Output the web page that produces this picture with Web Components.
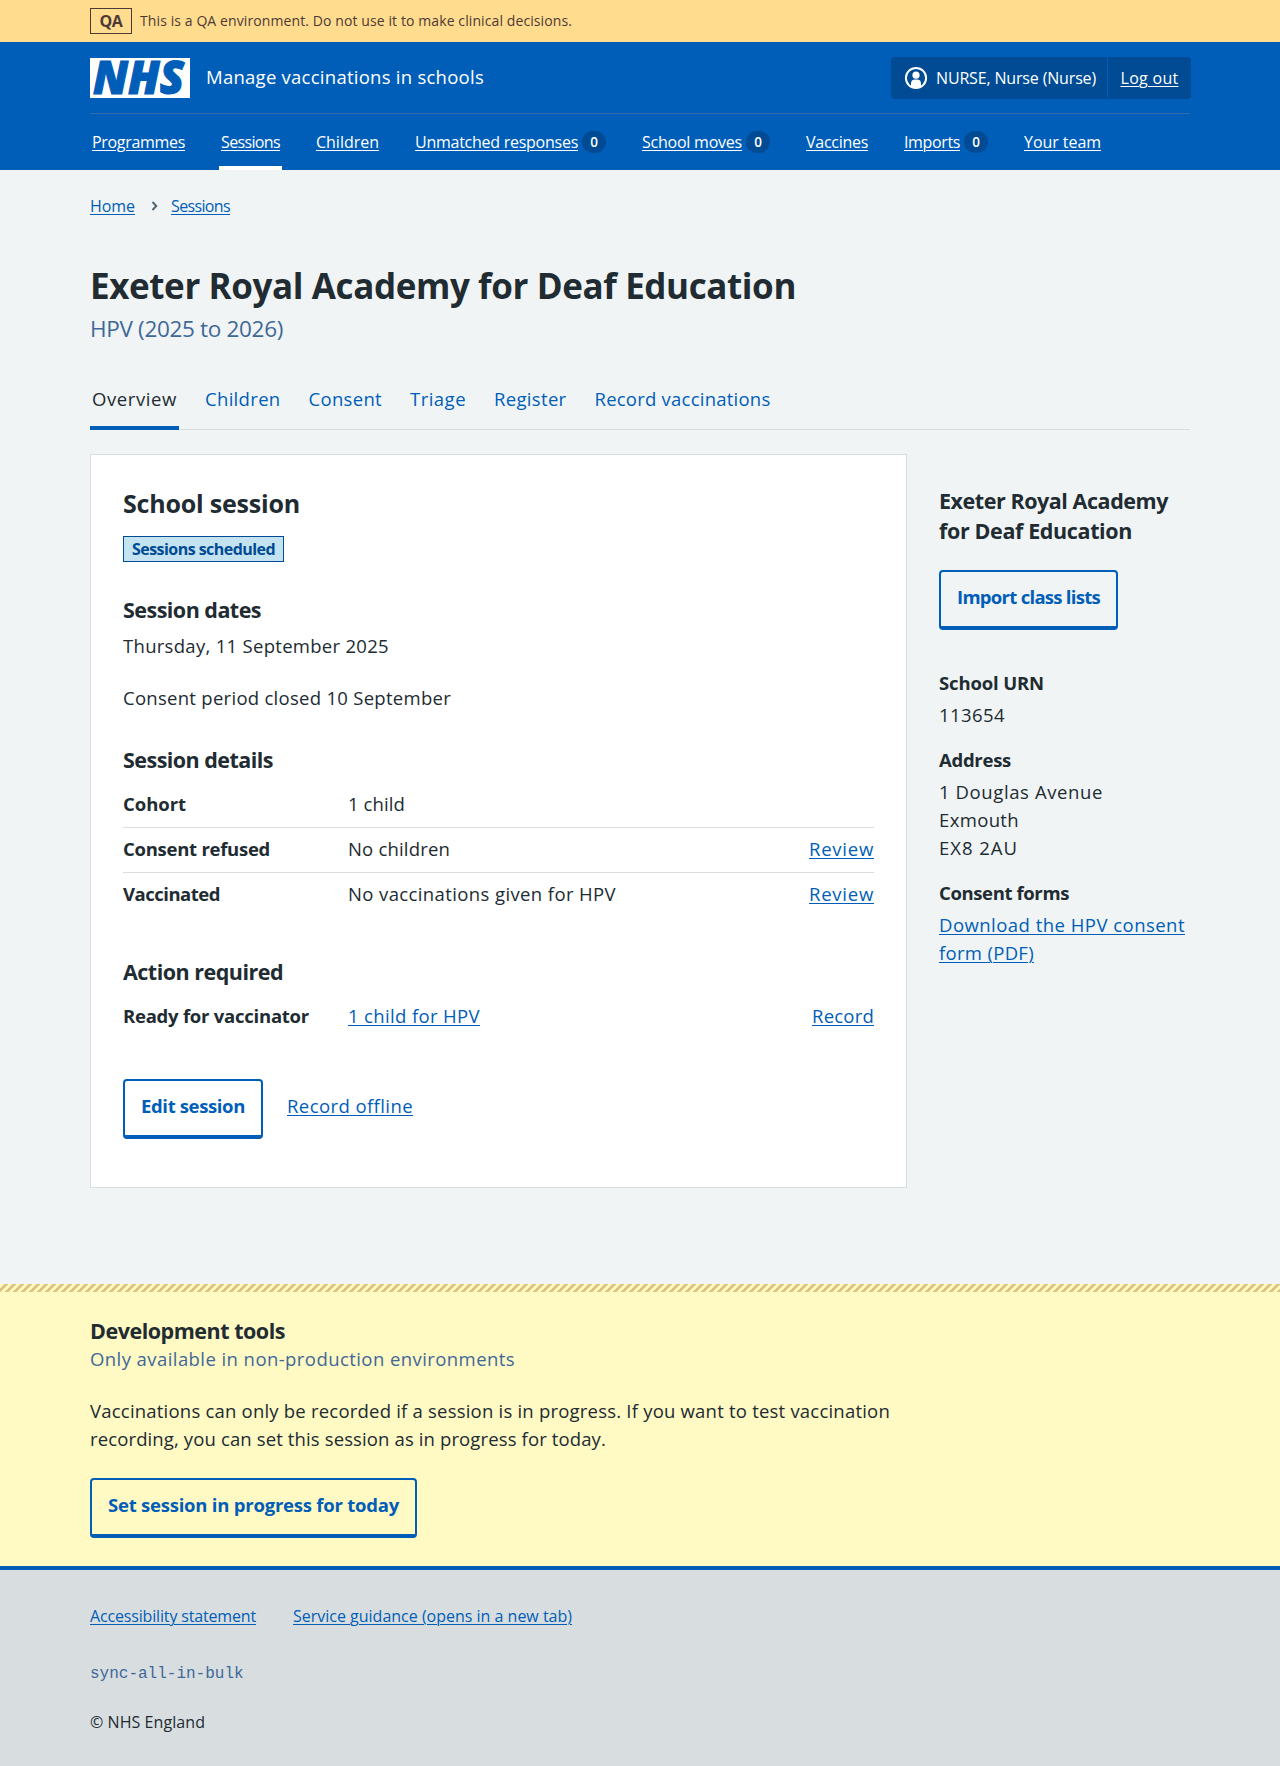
<!DOCTYPE html>
<html lang="en">
<head>
<meta charset="utf-8">
<title>Exeter Royal Academy for Deaf Education – Manage vaccinations in schools</title>
<style>
html{background:#d8dde0}
body{margin:0;background:#f0f4f5;color:#212b32;font-family:"Open Sans","Noto Sans",sans-serif;font-size:18.5px;line-height:28px}
</style>
</head>
<body>
<env-banner name="QA"><t-x w="432" s="14" l="22">This is a QA environment. Do not use it to make clinical decisions.</t-x></env-banner>
<site-header>
  <t-x slot="service" w="278" s="18.5">Manage vaccinations in schools</t-x>
  <t-x slot="user" w="160" s="16">NURSE, Nurse (Nurse)</t-x>
  <t-x slot="logout" link w="58" s="16">Log out</t-x>
  <nav-item><t-x link w="93" s="16">Programmes</t-x></nav-item>
  <nav-item current><t-x link w="59" s="16">Sessions</t-x></nav-item>
  <nav-item><t-x link w="63" s="16">Children</t-x></nav-item>
  <nav-item count="0"><t-x link w="163" s="16">Unmatched responses</t-x></nav-item>
  <nav-item count="0"><t-x link w="100" s="16">School moves</t-x></nav-item>
  <nav-item><t-x link w="62" s="16">Vaccines</t-x></nav-item>
  <nav-item count="0"><t-x link w="56" s="16">Imports</t-x></nav-item>
  <nav-item><t-x link w="77" s="16">Your team</t-x></nav-item>
</site-header>
<page-main>
  <bread-crumbs slot="top">
    <t-x slot="home" link w="45" s="16" l="24">Home</t-x>
    <t-x slot="here" link w="59" s="16" l="24">Sessions</t-x>
  </bread-crumbs>
  <page-title slot="top">
    <t-x b w="706" s="35" l="46">Exeter Royal Academy for Deaf Education</t-x>
    <t-x slot="caption" w="193" s="22.5" l="32">HPV (2025 to 2026)</t-x>
  </page-title>
  <tab-bar slot="top">
    <tab-item current><t-x w="85">Overview</t-x></tab-item>
    <tab-item><t-x w="75.5">Children</t-x></tab-item>
    <tab-item><t-x w="73.5">Consent</t-x></tab-item>
    <tab-item><t-x w="56">Triage</t-x></tab-item>
    <tab-item><t-x w="72.5">Register</t-x></tab-item>
    <tab-item><t-x w="176">Record vaccinations</t-x></tab-item>
  </tab-bar>
  <session-card>
    <t-x slot="title" b w="177" s="25" l="34">School session</t-x>
    <t-x slot="tag" b w="143" s="16" l="24">Sessions scheduled</t-x>
    <card-section space="32" gap="7">
      <t-x slot="title" b w="138" s="21.5" l="30">Session dates</t-x>
      <text-stack gap="24">
        <t-x w="266">Thursday, 11 September 2025</t-x>
        <t-x w="328">Consent period closed 10 September</t-x>
      </text-stack>
    </card-section>
    <card-section space="33" gap="8">
      <t-x slot="title" b w="150" s="21.5" l="30">Session details</t-x>
      <summary-row><t-x b w="63">Cohort</t-x><t-x slot="value" w="57">1 child</t-x></summary-row>
      <summary-row><t-x b w="147">Consent refused</t-x><t-x slot="value" w="102">No children</t-x><t-x slot="action" link w="65">Review</t-x></summary-row>
      <summary-row last><t-x b w="97">Vaccinated</t-x><t-x slot="value" w="268">No vaccinations given for HPV</t-x><t-x slot="action" link w="65">Review</t-x></summary-row>
    </card-section>
    <card-section space="39" gap="8">
      <t-x slot="title" b w="160" s="21.5" l="30">Action required</t-x>
      <summary-row last><t-x b w="186">Ready for vaccinator</t-x><t-x slot="value" link w="132">1 child for HPV</t-x><t-x slot="action" link w="62">Record</t-x></summary-row>
    </card-section>
    <app-button slot="actions" fill><t-x b w="104">Edit session</t-x></app-button>
    <t-x slot="actions" link w="126">Record offline</t-x>
  </session-card>
  <school-aside slot="aside">
    <t-x slot="title" b w="229" s="21.5" l="30">Exeter Royal Academy</t-x>
    <t-x slot="title" b w="193" s="21.5" l="30">for Deaf Education</t-x>
    <app-button slot="action"><t-x b w="143">Import class lists</t-x></app-button>
    <side-item><t-x slot="term" b w="105">School URN</t-x><t-x w="66">113654</t-x></side-item>
    <side-item><t-x slot="term" b w="72">Address</t-x><t-x w="164">1 Douglas Avenue</t-x><t-x w="80">Exmouth</t-x><t-x w="79">EX8 2AU</t-x></side-item>
    <side-item><t-x slot="term" b w="130">Consent forms</t-x><t-x link w="246">Download the HPV consent</t-x><t-x link w="95">form (PDF)</t-x></side-item>
  </school-aside>
</page-main>
<dev-tools>
  <t-x slot="title" b w="195" s="21.5">Development tools</t-x>
  <t-x slot="caption" w="425">Only available in non-production environments</t-x>
  <t-x w="800">Vaccinations can only be recorded if a session is in progress. If you want to test vaccination</t-x>
  <t-x w="516">recording, you can set this session as in progress for today.</t-x>
  <app-button slot="action"><t-x b w="291">Set session in progress for today</t-x></app-button>
</dev-tools>
<site-footer>
  <t-x slot="links" link w="166" s="16" l="24">Accessibility statement</t-x>
  <t-x slot="links" link w="279" s="16" l="24">Service guidance (opens in a new tab)</t-x>
  <span slot="build">sync-all-in-bulk</span>
  <t-x w="115" s="16" l="24">© NHS England</t-x>
</site-footer>
<script>
const define = (name, html, setup) => customElements.define(name, class extends HTMLElement {
  constructor(){
    super();
    const root = this.attachShadow({mode:'open'});
    const t = document.createElement('template');
    t.innerHTML = html;
    root.append(t.content.cloneNode(true));
  }
  connectedCallback(){ if(setup) setup(this, this.shadowRoot); }
});

define('env-banner', `<style>
:host{display:block;background:#ffdc8e;color:#4d3a36}
.in{width:1100px;height:42px;margin:auto;display:flex;align-items:center;gap:8px}
b{box-sizing:border-box;width:42px;height:26px;border:1px solid;font-size:16px;line-height:24px;font-weight:700;letter-spacing:-.5px;text-align:center}
</style><div class="in"><b></b><slot></slot></div>`, (h,r)=>r.querySelector('b').textContent=h.getAttribute('name'));

define('nhs-logo', `<style>:host{display:block;width:100px;height:40px}svg{display:block;overflow:visible}</style>
<svg width="100" height="40" viewBox="0 0 100 40"><rect width="100" height="40" fill="#fff"/>
<text x="3" y="36" textLength="91" lengthAdjust="spacingAndGlyphs" font-family="Open Sans" font-weight="800" font-style="italic" font-size="46" fill="#005eb8" stroke="#005eb8" stroke-width="1.2">NHS</text></svg>`);

define('user-icon', `<style>:host{display:block}svg{display:block}</style>
<svg width="24" height="24" viewBox="0 0 24 24"><circle cx="12" cy="12" r="10.1" fill="none" stroke="#fff" stroke-width="2"/>
<circle cx="12" cy="9.2" r="3.6" fill="#fff"/><path d="M7 20.6V17.5a4 4 0 0 1 4-4h2a4 4 0 0 1 4 4v3.1A10 10 0 0 1 7 20.6Z" fill="#fff"/></svg>`);

define('site-header', `<style>
:host{display:block;background:#005eb8;color:#fff}
.in{width:1100px;margin:auto}
.top{height:72px;display:flex;align-items:center;gap:16px;box-shadow:inset 0 -1px #336bad}
::slotted(t-x[slot=service]){padding-bottom:2px}
.account{margin-left:auto;margin-right:-1px;display:flex;height:42px;width:300px;background:#004b93;border-radius:4px}
.account>div{display:flex;align-items:center}
.user{width:216px;box-sizing:border-box;padding-left:13px;gap:8px}
.out{flex:1;justify-content:center;border-left:1px solid #005eb8;margin:1px 0}
nav{display:flex;gap:32px;height:56px}
</style><div class="in"><div class="top"><nhs-logo></nhs-logo><slot name="service"></slot>
<div class="account"><div class="user"><user-icon></user-icon><slot name="user"></slot></div><div class="out"><slot name="logout"></slot></div></div></div>
<nav><slot></slot></nav></div>`);

define('nav-item', `<style>
:host{display:flex;align-items:center;gap:4px;padding:0 2px}
:host([current]){box-shadow:inset 0 -4px #fff}
i{width:24px;height:22px;border-radius:12px;background:#004b93;font:600 13.5px/23px "Open Sans";text-align:center}
i:empty{display:none}
</style><slot></slot><i></i>`, (h,r)=>r.querySelector('i').textContent=h.getAttribute('count')||'');

define('page-main', `<style>
:host{display:block;width:1100px;margin:auto;padding:24px 0 96px}
.cols{display:flex;gap:32px;margin-top:24px;align-items:flex-start}
</style><slot name="top"></slot><div class="cols"><slot></slot><slot name="aside"></slot></div>`);

define('bread-crumbs', `<style>:host{display:flex;align-items:center;height:24px}svg{margin:0 13px 0 16px}</style>
<slot name="home"></slot><svg width="7" height="10" viewBox="0 0 7 10"><path d="M1.5 1 5.3 5 1.5 9" fill="none" stroke="#4c6272" stroke-width="1.9"/></svg><slot name="here"></slot>`);

define('page-title', `<style>:host{display:block;margin-top:45px}.c{margin-top:4px;color:#3f6898}</style><slot></slot><div class="c"><slot name="caption"></slot></div>`);

define('tab-bar', `<style>:host{display:flex;gap:24px;margin-top:40px;box-shadow:inset 0 -1px #d8dde0}</style><slot></slot>`);
define('tab-item', `<style>:host{display:block;padding:0 2px 13px;border-bottom:4px solid transparent;color:#005eb8}
:host([current]){border-color:#005eb8;color:#212b32}</style><slot></slot>`);

define('session-card', `<style>
:host{display:block;box-sizing:border-box;width:817px;background:#fff;border:1px solid #d8dde0;padding:31px 32px 48px}
.tag{display:flex;width:max-content;margin-top:16px;border:1px solid #004b93;background:#c4e3f0;color:#004b93;padding:0 8px}
.actions{display:flex;gap:24px;margin-top:39px}
::slotted(card-section:first-of-type){padding-top:1px}
::slotted(t-x[slot=actions]){padding-top:13px}
</style><slot name="title"></slot><div class="tag"><slot name="tag"></slot></div><slot></slot><div class="actions"><slot name="actions"></slot></div>`);

define('card-section', `<style>:host{display:block}.b{display:block}</style><slot name="title"></slot><div class="b"><slot></slot></div>`, (h,r)=>{
  h.style.marginTop=h.getAttribute('space')+'px'; r.querySelector('.b').style.marginTop=h.getAttribute('gap')+'px';});
define('text-stack', `<style>:host{display:flex;flex-direction:column}</style><slot></slot>`, h=>h.style.gap=h.getAttribute('gap')+'px');

define('summary-row', `<style>
:host{display:grid;grid-template-columns:225px 1fr auto;padding:7px 0 9px;border-bottom:1px solid #d8dde0}
:host([last]){border-color:transparent}
</style><div><slot></slot></div><div><slot name="value"></slot></div><div><slot name="action"></slot></div>`);

define('app-button', `<style>
:host{display:block;box-sizing:border-box;width:max-content;height:60px;padding:11px 16px 0;border:2px solid #005eb8;border-bottom-width:4px;border-radius:4px;color:#005eb8}
:host([fill]){background:#fff}
</style><slot></slot>`);

define('school-aside', `<style>:host{display:block;flex:1;padding-top:32px}.a{margin:24px 0 39px}</style>
<slot name="title"></slot><div class="a"><slot name="action"></slot></div><slot></slot>`);
define('side-item', `<style>:host{display:block;margin-top:17px}.d{margin-top:4px}</style><slot name="term"></slot><div class="d"><slot></slot></div>`);

define('dev-tools', `<style>
:host{display:block;background:#fff9c4}
.stripe{height:8px;background:linear-gradient(135deg,#fff9c4 25%,#dfc27d 25% 50%,#fff9c4 50% 75%,#dfc27d 75%) 0 0/8px 8px}
.in{width:1100px;margin:auto;padding:25px 0 28px}
.c{color:#3f6898;margin-bottom:24px}.a{margin-top:25px}
</style><div class="stripe"></div><div class="in"><slot name="title"></slot><div class="c"><slot name="caption"></slot></div><slot></slot><div class="a"><slot name="action"></slot></div></div>`);

define('site-footer', `<style>
:host{display:block;background:#d8dde0;border-top:4px solid #005eb8}
.in{width:1100px;margin:auto;padding:34px 0 32px}
.l{display:flex;gap:37px}
.b{margin:34px 0 24px;font:16px/24px "Liberation Mono",monospace;color:#3f6898}
</style><div class="in"><div class="l"><slot name="links"></slot></div><div class="b"><slot name="build"></slot></div><slot></slot></div>`);

/* One line of type: size (s), line height (l), bold (b), and a set width (w) reached by tracking. */
define('t-x', `<style>
:host{display:block}
span{display:inline-block;vertical-align:top;white-space:nowrap}
:host([b]){font-weight:700}
:host([link]) span{text-decoration:underline;text-decoration-thickness:1px;text-underline-offset:2px}
:host([link]:not([slot=logout])){color:var(--link,#005eb8)}
</style><span><slot></slot></span>`, (h,r)=>{
  if(h.closest('site-header')) h.style.setProperty('--link','#fff');
  h.style.fontSize=(h.getAttribute('s')||18.5)+'px';
  h.style.lineHeight=(h.getAttribute('l')||28)+'px';
  const span=r.querySelector('span'), w=+h.getAttribute('w');
  span.style.letterSpacing=(w-span.getBoundingClientRect().width)/h.textContent.length+'px';
  h.style.width=w+'px';
});
</script>
</body>
</html>
